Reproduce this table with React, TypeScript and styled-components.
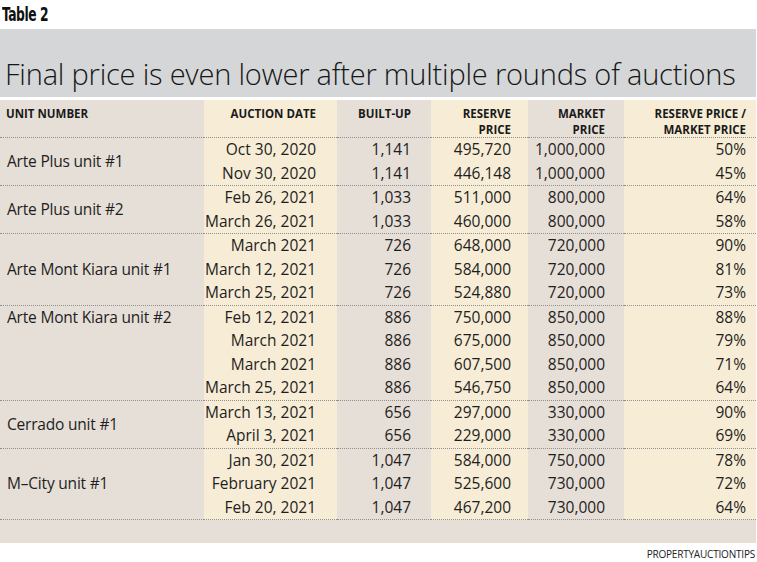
import React from 'react';
import styled, { createGlobalStyle } from 'styled-components';

const GlobalStyle = createGlobalStyle`
  html, body {
    margin: 0;
    padding: 0;
    background: #ffffff;
  }
  body {
    font-family: 'Open Sans', 'Noto Sans', sans-serif;
    color: #1e1e1e;
  }
`;

const GRAY = '#e6dfd7';
const CREAM = '#f7edd6';

const Page = styled.div`
  width: 756px;
  display: flex;
  flex-direction: column;
`;

const TableLabel = styled.div`
  height: 29px;
  padding: 1px 0 0 2px;
  box-sizing: border-box;
  font-family: 'DejaVu Sans Condensed', 'DejaVu Sans', sans-serif;
  font-weight: 700;
  font-size: 19px;
  line-height: 26px;
  letter-spacing: -0.6px;
  color: #111;
`;

const LabelText = styled.span`
  display: inline-block;
  transform: scaleX(0.72);
  transform-origin: left center;
`;

const Banner = styled.div`
  height: 68px;
  background: #d5d6d8;
  display: flex;
  align-items: flex-end;
  padding: 0 0 6px 5px;
  box-sizing: border-box;
  margin-bottom: 3px;
`;

const Title = styled.h1`
  margin: 0;
  font-family: 'Open Sans', sans-serif;
  font-weight: 300;
  font-size: 29px;
  line-height: 34px;
  color: #161616;
  letter-spacing: -0.2px;
`;

const Table = styled.table`
  width: 756px;
  border-collapse: collapse;
  table-layout: fixed;
`;

const HeadCell = styled.th<{ $tone: string; $align?: string; $pad?: number }>`
  background: ${(p) => p.$tone};
  text-align: ${(p) => p.$align || 'right'};
  vertical-align: top;
  font-family: 'Open Sans', sans-serif;
  font-weight: 700;
  font-size: 11.5px;
  line-height: 15.5px;
  letter-spacing: 0;
  padding: 6px ${(p) => p.$pad ?? 19}px 0 6px;
  height: 37px;
  box-sizing: border-box;
  color: #1a1a1a;
  border-bottom: 1px dotted #8f8f8f;
`;

const Cell = styled.td<{ $tone: string; $top?: boolean; $pad?: number }>`
  background: ${(p) => p.$tone};
  text-align: right;
  font-size: 15.5px;
  height: 23.5px;
  line-height: 23px;
  padding: 0 ${(p) => p.$pad ?? 19}px 0 0;
  white-space: nowrap;
  border-top: ${(p) => (p.$top ? '1px dotted #8f8f8f' : 'none')};
`;

const UnitCell = styled.td<{ $valign: string }>`
  background: ${GRAY};
  vertical-align: ${(p) => p.$valign};
  font-size: 15.5px;
  line-height: 23px;
  letter-spacing: -0.2px;
  padding: 0 0 0 7px;
  white-space: nowrap;
  border-top: 1px dotted #8f8f8f;
`;

const FootCell = styled.td`
  background: ${GRAY};
  height: 23px;
  padding: 0;
  border-top: 1px dotted #8f8f8f;
`;

const Source = styled.div`
  text-align: right;
  font-size: 10px;
  letter-spacing: -0.2px;
  padding: 4px 1px 0 0;
  color: #222;
`;

interface Auction {
  date: string;
  builtUp: string;
  reserve: string;
  market: string;
  ratio: string;
}

interface Unit {
  name: string;
  valign: string;
  auctions: Auction[];
}

const units: Unit[] = [
  {
    name: 'Arte Plus unit #1',
    valign: 'middle',
    auctions: [
      { date: 'Oct 30, 2020', builtUp: '1,141', reserve: '495,720', market: '1,000,000', ratio: '50%' },
      { date: 'Nov 30, 2020', builtUp: '1,141', reserve: '446,148', market: '1,000,000', ratio: '45%' },
    ],
  },
  {
    name: 'Arte Plus unit #2',
    valign: 'middle',
    auctions: [
      { date: 'Feb 26, 2021', builtUp: '1,033', reserve: '511,000', market: '800,000', ratio: '64%' },
      { date: 'March 26, 2021', builtUp: '1,033', reserve: '460,000', market: '800,000', ratio: '58%' },
    ],
  },
  {
    name: 'Arte Mont Kiara unit #1',
    valign: 'middle',
    auctions: [
      { date: 'March 2021', builtUp: '726', reserve: '648,000', market: '720,000', ratio: '90%' },
      { date: 'March 12, 2021', builtUp: '726', reserve: '584,000', market: '720,000', ratio: '81%' },
      { date: 'March 25, 2021', builtUp: '726', reserve: '524,880', market: '720,000', ratio: '73%' },
    ],
  },
  {
    name: 'Arte Mont Kiara unit #2',
    valign: 'top',
    auctions: [
      { date: 'Feb 12, 2021', builtUp: '886', reserve: '750,000', market: '850,000', ratio: '88%' },
      { date: 'March 2021', builtUp: '886', reserve: '675,000', market: '850,000', ratio: '79%' },
      { date: 'March 2021', builtUp: '886', reserve: '607,500', market: '850,000', ratio: '71%' },
      { date: 'March 25, 2021', builtUp: '886', reserve: '546,750', market: '850,000', ratio: '64%' },
    ],
  },
  {
    name: 'Cerrado unit #1',
    valign: 'middle',
    auctions: [
      { date: 'March 13, 2021', builtUp: '656', reserve: '297,000', market: '330,000', ratio: '90%' },
      { date: 'April 3, 2021', builtUp: '656', reserve: '229,000', market: '330,000', ratio: '69%' },
    ],
  },
  {
    name: 'M\u2013City unit #1',
    valign: 'middle',
    auctions: [
      { date: 'Jan 30, 2021', builtUp: '1,047', reserve: '584,000', market: '750,000', ratio: '78%' },
      { date: 'February 2021', builtUp: '1,047', reserve: '525,600', market: '730,000', ratio: '72%' },
      { date: 'Feb 20, 2021', builtUp: '1,047', reserve: '467,200', market: '730,000', ratio: '64%' },
    ],
  },
];

export default function App() {
  return (
    <Page>
      <GlobalStyle />
      <TableLabel>
        <LabelText>Table 2</LabelText>
      </TableLabel>
      <Banner>
        <Title>Final price is even lower after multiple rounds of auctions</Title>
      </Banner>
      <Table>
        <colgroup>
          <col style={{ width: 204 }} />
          <col style={{ width: 133 }} />
          <col style={{ width: 94 }} />
          <col style={{ width: 97 }} />
          <col style={{ width: 96 }} />
          <col style={{ width: 132 }} />
        </colgroup>
        <thead>
          <tr>
            <HeadCell $tone={GRAY} $align="left" $pad={0}>UNIT NUMBER</HeadCell>
            <HeadCell $tone={CREAM} $pad={21}>AUCTION DATE</HeadCell>
            <HeadCell $tone={GRAY} $pad={20}>BUILT-UP</HeadCell>
            <HeadCell $tone={CREAM} $pad={17}>RESERVE<br />PRICE</HeadCell>
            <HeadCell $tone={GRAY} $pad={19}>MARKET<br />PRICE</HeadCell>
            <HeadCell $tone={CREAM} $pad={10}>RESERVE PRICE /<br />MARKET PRICE</HeadCell>
          </tr>
        </thead>
        <tbody>
          {units.map((unit) =>
            unit.auctions.map((a, i) => (
              <tr key={unit.name + i}>
                {i === 0 && (
                  <UnitCell rowSpan={unit.auctions.length} $valign={unit.valign}>
                    {unit.name}
                  </UnitCell>
                )}
                <Cell $tone={CREAM} $top={i === 0} $pad={21}>{a.date}</Cell>
                <Cell $tone={GRAY} $top={i === 0} $pad={20}>{a.builtUp}</Cell>
                <Cell $tone={CREAM} $top={i === 0} $pad={17}>{a.reserve}</Cell>
                <Cell $tone={GRAY} $top={i === 0} $pad={19}>{a.market}</Cell>
                <Cell $tone={CREAM} $top={i === 0} $pad={10}>{a.ratio}</Cell>
              </tr>
            ))
          )}
          <tr>
            <FootCell colSpan={6} />
          </tr>
        </tbody>
      </Table>
      <Source>PROPERTYAUCTIONTIPS</Source>
    </Page>
  );
}
